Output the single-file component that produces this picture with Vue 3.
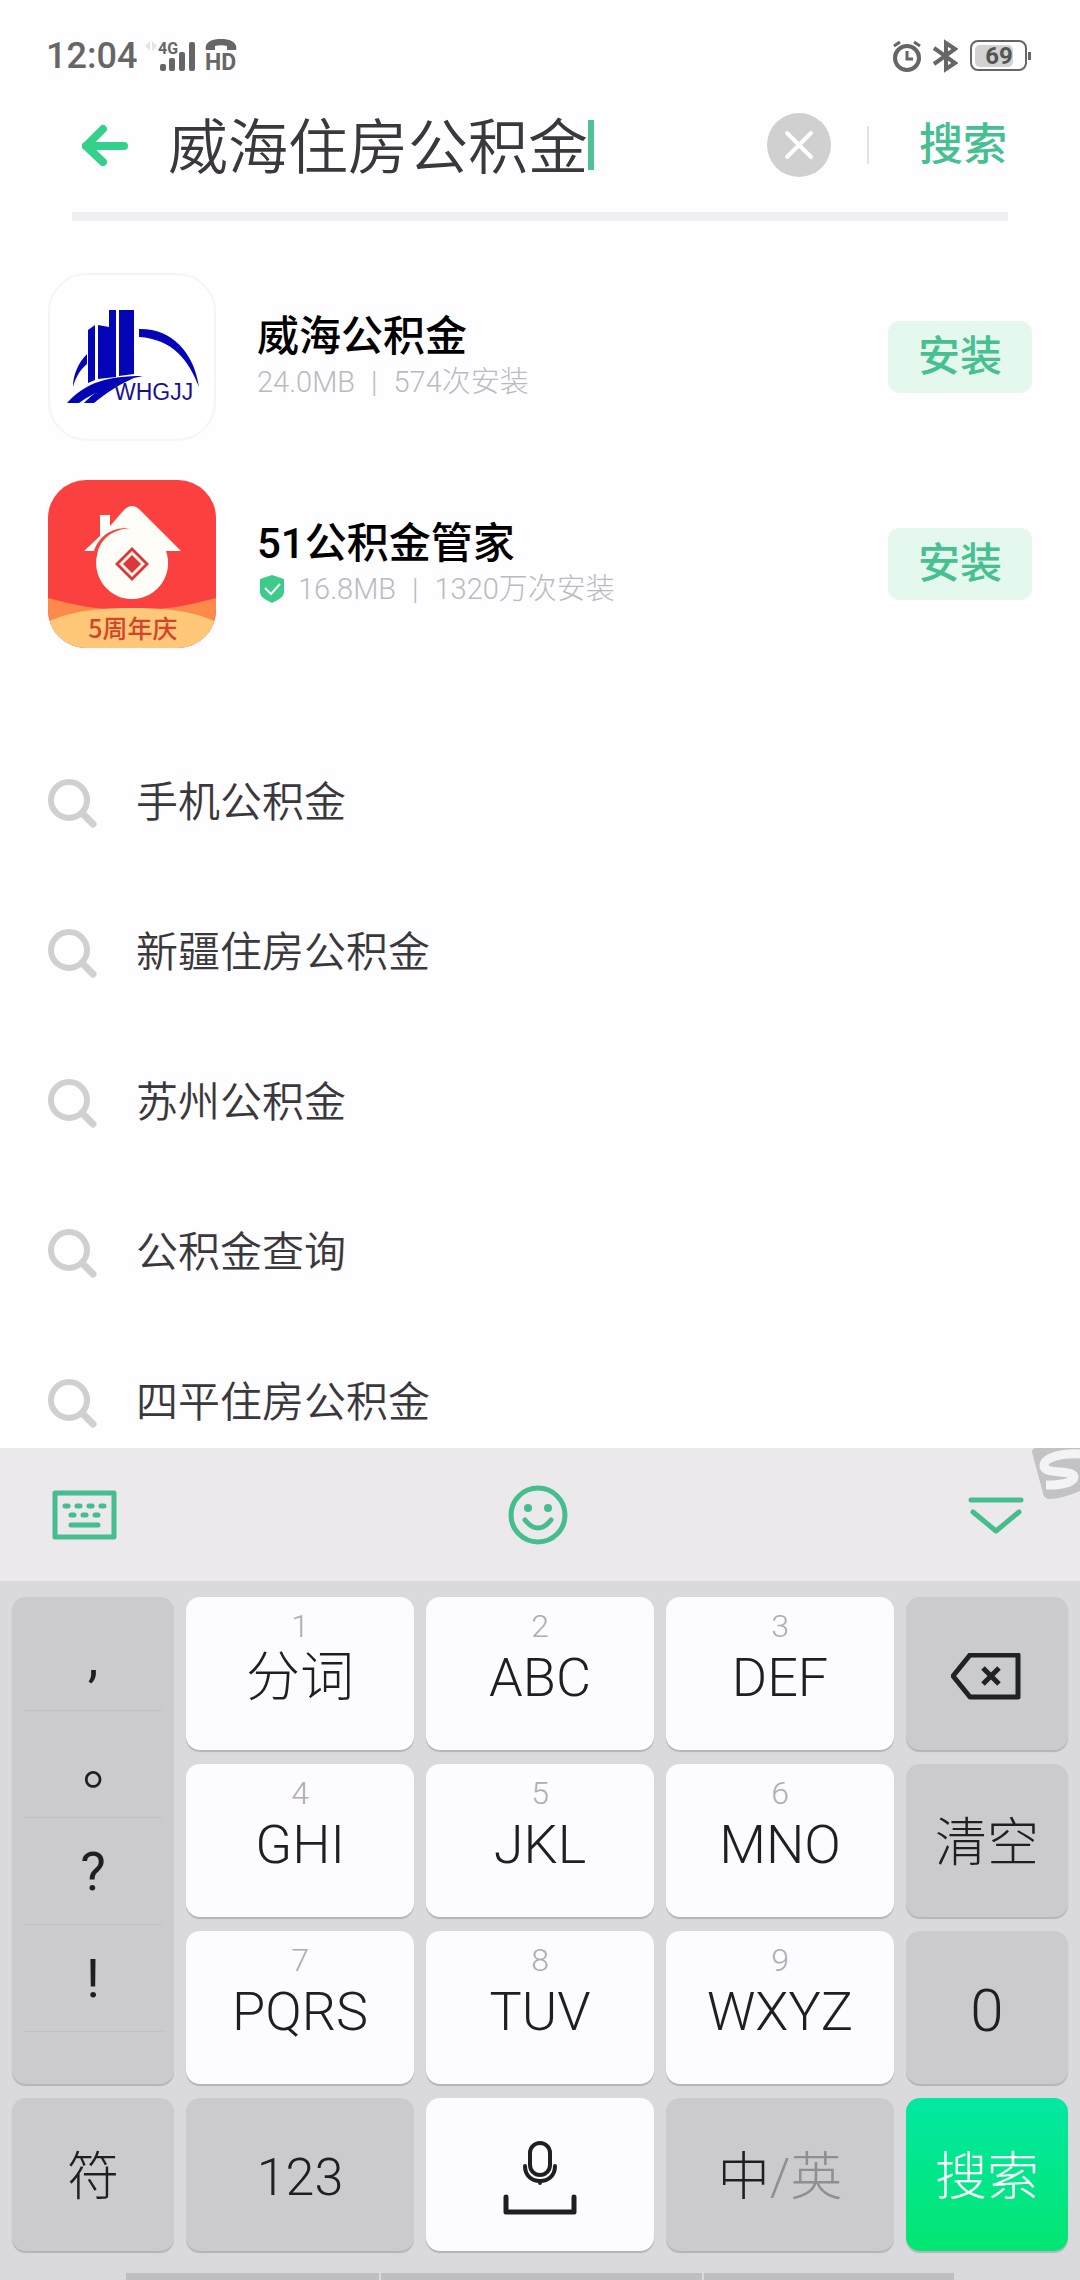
<script setup>
import { ref } from 'vue'

const query = ref('威海住房公积金')

const apps = [
  { id: 'whgjj', name: '威海公积金', size: '24.0MB', installs: '574次安装', verified: false },
  { id: 'gjj51', name: '51公积金管家', size: '16.8MB', installs: '1320万次安装', verified: true },
]

const suggestions = ['手机公积金', '新疆住房公积金', '苏州公积金', '公积金查询', '四平住房公积金']

const marks = [',', '。', '?', '!']

const keys = [
  { digit: '1', label: '分词' },
  { digit: '2', label: 'ABC' },
  { digit: '3', label: 'DEF' },
  { side: true, icon: 'delete', label: '删除' },
  { digit: '4', label: 'GHI' },
  { digit: '5', label: 'JKL' },
  { digit: '6', label: 'MNO' },
  { side: true, label: '清空' },
  { digit: '7', label: 'PQRS' },
  { digit: '8', label: 'TUV' },
  { digit: '9', label: 'WXYZ' },
  { side: true, label: '0', zero: true },
]
</script>

<template>
  <div class="screen">
    <header class="status">
      <div class="status-left">
        <span class="time">12:04</span>
        <svg class="hint" width="12" height="12" viewBox="0 0 12 12" fill="#e4e4e4">
          <path d="M5 1V11L0 6Z" /><path d="M7 1L12 6L7 11Z" />
        </svg>
        <svg class="signal" width="40" height="32" viewBox="0 0 40 32" fill="#666">
          <text x="1" y="14" font-size="16" font-weight="700">4G</text>
          <rect x="3" y="24" width="6" height="7" rx="2" />
          <rect x="12" y="18" width="6" height="13" rx="2" />
          <rect x="22" y="12" width="6" height="19" rx="2" />
          <rect x="32" y="2" width="6" height="29" rx="2" />
        </svg>
        <svg width="32" height="34" viewBox="0 0 32 34" fill="#666">
          <path d="M1 11C-1 3 7 0 16 0S33 3 31 11H22V7C18 6 14 6 10 7V11Z" />
          <text x="0" y="31" font-size="23" font-weight="700">HD</text>
        </svg>
      </div>
      <div class="status-right">
        <svg width="30" height="34" viewBox="0 0 30 34" fill="none" stroke="#666" stroke-width="4">
          <circle cx="15" cy="19" r="12" />
          <path d="M15 12V20H21" stroke-width="3" />
          <path d="M2 7L8 3M22 3L28 7" stroke-width="3" />
        </svg>
        <svg class="bluetooth" width="26" height="34" viewBox="0 0 26 34" fill="none" stroke="#666" stroke-width="4">
          <path d="M2 9L23 24L14 30V4L23 10L2 25" />
        </svg>
        <svg width="62" height="32" viewBox="0 0 62 32">
          <rect x="5" y="5" width="38" height="22" rx="5" fill="#d2d2d2" />
          <rect x="1" y="1" width="55" height="29" rx="7" fill="none" stroke="#666" stroke-width="2" />
          <path d="M58 12H61V20H58Z" fill="#666" />
          <text x="29" y="24" font-size="24" font-weight="700" text-anchor="middle" fill="#555">69</text>
        </svg>
      </div>
    </header>

    <form class="search" role="search" @submit.prevent>
      <button type="button" class="back" aria-label="返回">
        <svg width="48" height="42" viewBox="0 0 48 42" fill="none" stroke="#34d18b" stroke-width="8" stroke-linecap="round" stroke-linejoin="round">
          <path d="M6 22H44" /><path d="M23 5L6 22L23 38" />
        </svg>
      </button>
      <input v-model="query" class="query" type="text" aria-label="搜索应用" />
      <span class="caret"></span>
      <button type="button" class="clear" aria-label="清除">
        <svg width="30" height="30" viewBox="0 0 30 30" fill="none" stroke="#fff" stroke-width="4" stroke-linecap="round">
          <path d="M3 3L27 27M27 3L3 27" />
        </svg>
      </button>
      <span class="bar"></span>
      <button type="submit" class="submit">搜索</button>
    </form>
    <div class="underline"></div>

    <main class="results">
      <ul class="apps">
        <li v-for="app in apps" :key="app.id" class="app">
          <svg v-if="app.id === 'whgjj'" class="icon" viewBox="0 0 168 168">
            <rect x="1" y="1" width="166" height="166" rx="38" fill="#fff" stroke="#f4f4f9" stroke-width="2" />
            <g fill="#0505b8">
              <path d="M40 57L47 52V107L40 110Z" />
              <path d="M50 52L61 54V37H68V104L50 106Z" />
              <path d="M71 37H86V101L71 103Z" />
              <path d="M91 56C122 55 146 78 151 114C141 88 125 66 91 64Z" />
              <path d="M39 81C30 90 25 102 25 114C28 103 33 96 39 91Z" />
              <path d="M19 130C38 109 60 103 95 103C70 108 48 118 31 130Z" />
              <path d="M36 130C48 118 60 109 86 105C68 113 57 121 46 130Z" />
            </g>
            <text x="66" y="127" font-size="23" fill="#1c1290" class="logo-text">WHGJJ</text>
          </svg>
          <svg v-else class="icon" viewBox="0 0 168 168">
            <defs>
              <clipPath id="tile"><rect width="168" height="168" rx="38" /></clipPath>
            </defs>
            <g clip-path="url(#tile)">
              <rect width="168" height="168" fill="#fb4040" />
              <path d="M0 118C30 126 50 130 84 130S138 126 168 118V168H0Z" fill="#fd8a4a" />
              <path d="M0 142C24 130 56 128 84 128S144 130 168 142V168H0Z" fill="#fec878" />
              <path d="M52 56V35H62V46L76 30Q84 22 92 30L133 71H118A36 36 0 1 1 49 75C52 60 62 50 82 48C62 47 50 58 46 71H36Z" fill="#fffdf8" />
              <path d="M84 67L101 84L84 101L67 84Z" fill="#d83a3c" />
              <path d="M84 71L97 84L84 97L71 84Z" fill="#fff0e8" />
              <path d="M84 75L93 84L84 93L75 84Z" fill="#d83a3c" />
              <text x="85" y="158" font-size="25" font-weight="500" text-anchor="middle" fill="#d5432c" class="banner-text">5周年庆</text>
            </g>
          </svg>
          <div class="info">
            <h2 class="name">{{ app.name }}</h2>
            <p class="meta">
              <svg v-if="app.verified" class="shield" width="24" height="28" viewBox="0 0 24 28">
                <path d="M12 0L24 4V17C24 22 18 25 12 28C6 25 0 22 0 17V4Z" fill="#3ccb88" />
                <path d="M5 13L11 19L20 9" fill="none" stroke="#fff" stroke-width="2" />
              </svg>
              <span>{{ app.size }}</span><span class="pipe">|</span><span>{{ app.installs }}</span>
            </p>
          </div>
          <button type="button" class="install">安装</button>
        </li>
      </ul>
      <ul class="suggestions">
        <li v-for="item in suggestions" :key="item">
          <a href="#" class="suggestion">
            <svg width="50" height="50" viewBox="0 0 50 50" fill="none" stroke="#d0d0d0" stroke-width="6">
              <circle cx="21" cy="22" r="18" /><path d="M34 35L45 46" stroke-width="7" stroke-linecap="round" />
            </svg>
            <span>{{ item }}</span>
          </a>
        </li>
      </ul>
    </main>

    <section class="keyboard" aria-label="键盘">
      <div class="tools">
        <button type="button" aria-label="切换键盘">
          <svg width="66" height="50" viewBox="0 0 66 50" fill="none" stroke="#45bd8c" stroke-width="5" stroke-linecap="round" stroke-linejoin="round">
            <rect x="3" y="3" width="59" height="44" />
            <path d="M13 16H16M25 16H28M37 16H40M49 16H52M19 25H22M31 25H34M43 25H46M19 35H46" />
          </svg>
        </button>
        <button type="button" aria-label="表情">
          <svg width="60" height="60" viewBox="0 0 60 60" fill="none" stroke="#45bd8c" stroke-width="5" stroke-linecap="round">
            <circle cx="30" cy="30" r="27" />
            <path d="M17 35Q30 51 43 35" />
            <circle cx="20" cy="23" r="4" fill="#45bd8c" stroke="none" /><circle cx="40" cy="23" r="4" fill="#45bd8c" stroke="none" />
          </svg>
        </button>
        <button type="button" aria-label="收起键盘">
          <svg width="56" height="38" viewBox="0 0 56 38" fill="none" stroke="#45bd8c" stroke-width="5" stroke-linecap="round" stroke-linejoin="round">
            <path d="M3 4H53M5 16L28 35L51 16" />
          </svg>
        </button>
        <svg class="brand" width="48" height="52" viewBox="0 0 48 52">
          <path d="M0 4Q0 0 4 0H48V43Q32 50 18 51Q12 51 11 45Z" fill="#c3c2c5" />
          <path d="M48 6C30 5 12 9 12 18C12 27 42 21 42 29C41 36 25 37 14 37" fill="none" stroke="#f3f2f4" stroke-width="9" />
        </svg>
      </div>

      <div class="keys">
        <div class="marks">
          <button v-for="mark in marks" :key="mark" type="button" class="mark" :class="{ stop: mark === '。' }">{{ mark }}</button>
        </div>
        <button v-for="key in keys" :key="key.label" type="button" class="key" :class="{ gray: key.side, letters: key.digit, zero: key.zero }" :aria-label="key.label">
          <svg v-if="key.icon" width="72" height="48" viewBox="0 0 72 48" fill="none" stroke="#1f2323" stroke-width="5" stroke-linejoin="round">
            <path d="M2 23L19 2H67V44H19Z" />
            <path d="M32 15L48 31M48 15L32 31" />
          </svg>
          <template v-else>
            <span v-if="key.digit" class="digit">{{ key.digit }}</span>
            <span class="label">{{ key.label }}</span>
          </template>
        </button>
        <button type="button" class="key gray">符</button>
        <button type="button" class="key gray">123</button>
        <button type="button" class="key" aria-label="语音空格">
          <svg width="74" height="78" viewBox="0 0 74 78" fill="none" stroke="#1f1f23" stroke-width="4" stroke-linecap="round">
            <rect x="27" y="4" width="20" height="32" rx="10" />
            <path d="M22 27C22 37 29 42 37 42S52 37 52 27M37 42V44" />
            <path d="M3 58V73H71V58" stroke-width="5" stroke-linejoin="round" />
          </svg>
        </button>
        <button type="button" class="key gray"><span>中<span class="dim">/英</span></span></button>
        <button type="button" class="key go">搜索</button>
      </div>
      <div class="dock"><span></span><span></span><span></span></div>
    </section>
  </div>
</template>

<style>
body {
  margin: 0;
  background: #fefdff;
}
</style>

<style scoped>
.screen {
  display: flex;
  flex-direction: column;
  height: 100vh;
  overflow: hidden;
  background: #fefdff;
  color: #3a383c;
  font-family: Roboto, "Noto Sans CJK SC", sans-serif;
}
button {
  display: flex;
  align-items: center;
  justify-content: center;
  padding: 0;
  border: 0;
  background: none;
  color: inherit;
  font: inherit;
}
svg {
  display: block;
  flex: none;
}
ul {
  margin: 0;
  padding: 0;
  list-style: none;
}

.status {
  display: flex;
  flex: none;
  align-items: center;
  justify-content: space-between;
  height: 112px;
  padding: 0 48px 0 46px;
  box-sizing: border-box;
}
.status-left,
.status-right {
  display: flex;
  align-items: center;
}
.time {
  color: #666;
  font-size: 36px;
  font-weight: 500;
}
.hint {
  margin: 0 0 20px 8px;
}
.signal {
  margin-right: 8px;
  overflow: visible;
}
.bluetooth {
  margin: 0 12px 0 10px;
}

.search {
  display: flex;
  flex: none;
  align-items: center;
  height: 66px;
  padding: 0 73px 0 80px;
}
.query {
  width: 420px;
  height: 66px;
  margin-left: 40px;
  padding: 0 0 6px;
  border: 0;
  outline: 0;
  box-sizing: border-box;
  background: none;
  color: #3a383c;
  caret-color: transparent;
  font: 350 60px/60px Roboto, "Noto Sans CJK SC", sans-serif;
}
.caret {
  width: 6px;
  height: 50px;
  background: #4fc192;
}
.clear {
  width: 64px;
  height: 64px;
  margin-left: auto;
  border-radius: 50%;
  background: #d0d0d0;
}
.bar {
  width: 2px;
  height: 38px;
  margin: 0 50px 0 36px;
  background: #e2e2e4;
}
.submit {
  color: #46c090;
  font-size: 44px;
  font-weight: 500;
  line-height: 66px;
}
.underline {
  flex: none;
  height: 9px;
  margin: 34px 72px 0;
  background: #f1eff3;
}

.results {
  flex: 1;
  min-height: 0;
  overflow: hidden;
  padding: 52px 48px 0;
}
.apps {
  display: grid;
  gap: 39px;
}
.app {
  display: flex;
  align-items: center;
}
.icon {
  width: 168px;
  height: 168px;
}
.logo-text {
  font-family: "Liberation Sans", sans-serif;
}
.banner-text {
  font-family: "Noto Sans CJK SC", sans-serif;
}
.info {
  flex: 1;
  margin-left: 41px;
}
.name {
  margin: 0;
  color: #000;
  font-size: 42px;
  font-weight: 500;
  line-height: 50px;
}
.meta {
  display: flex;
  align-items: center;
  margin: 0;
  color: #bcbabe;
  font-size: 29px;
  font-weight: 300;
  line-height: 40px;
}
.shield {
  margin: 0 14px 0 3px;
}
.pipe {
  margin: 0 16px;
}
.install {
  width: 144px;
  height: 72px;
  border-radius: 12px;
  background: #e4f8ee;
  color: #46c090;
  font-size: 42px;
  font-weight: 500;
  line-height: 72px;
}
.suggestions {
  padding-top: 80px;
}
.suggestion {
  display: flex;
  align-items: center;
  gap: 38px;
  height: 150px;
  color: #3a383c;
  font-size: 42px;
  font-weight: 350;
  line-height: 50px;
  text-decoration: none;
}

.keyboard {
  flex: none;
  background: #dad9dd;
}
.tools {
  position: relative;
  display: grid;
  grid-template-columns: 1fr auto 1fr;
  align-items: center;
  justify-items: start;
  height: 133px;
  padding: 0 56px 0 52px;
  background: #ebe9eb;
}
.tools button:nth-child(3) {
  justify-self: end;
}
.brand {
  position: absolute;
  top: 0;
  right: 0;
}
.keys {
  display: grid;
  grid-template-columns: 162fr 228fr 228fr 228fr 162fr;
  grid-auto-rows: 153px;
  gap: 14px 12px;
  padding: 16px 12px 22px;
}
.key,
.marks {
  border-radius: 14px;
  background: #fcfbff;
  box-shadow: 0 2px 1px #b4b3b8;
  color: #1f1f23;
  font-size: 52px;
  font-weight: 300;
}
.key {
  padding-top: 6px;
  line-height: 68px;
}
.marks {
  display: flex;
  flex-direction: column;
  grid-row: span 3;
  padding: 7px 12px 0;
  background: #cbcbcf;
}
.mark {
  height: 107px;
  border-bottom: 1px solid #bfbfc4;
  font-size: 54px;
  font-weight: 400;
}
.stop {
  padding-top: 24px;
  font-family: "Noto Sans CJK TC", sans-serif;
}
.key.gray {
  background: #cbcbcf;
}
.key.letters {
  flex-direction: column;
  justify-content: flex-start;
  padding-top: 12px;
  font-size: 54px;
}
.digit {
  color: #aeadb2;
  font-size: 32px;
  line-height: 34px;
}
.letters .label {
  line-height: 70px;
}
.key.zero {
  font-size: 60px;
}
.dim {
  color: #8e8f93;
}
.key.go {
  background: linear-gradient(#02e8a2, #03e572);
  color: #fff;
}
.dock {
  display: grid;
  grid-template-columns: 253fr 321fr 250fr;
  gap: 2px;
  height: 7px;
  margin: 0 126px;
}
.dock span {
  background: #bfbec3;
}
</style>
